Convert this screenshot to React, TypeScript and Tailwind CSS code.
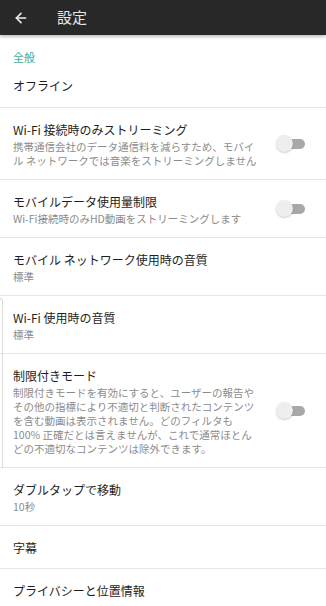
import { ArrowLeft } from 'lucide-react';

type Item = {
  title: string;
  sub?: string[];
  toggle?: boolean;
};

const items: Item[] = [
  {
    title: 'Wi-Fi 接続時のみストリーミング',
    sub: ['携帯通信会社のデータ通信料を減らすため、モバイ', 'ル ネットワークでは音楽をストリーミングしません'],
    toggle: true,
  },
  { title: 'モバイルデータ使用量制限', sub: ['Wi-Fi接続時のみHD動画をストリーミングします'], toggle: true },
  { title: 'モバイル ネットワーク使用時の音質', sub: ['標準'] },
  { title: 'Wi-Fi 使用時の音質', sub: ['標準'] },
  {
    title: '制限付きモード',
    sub: [
      '制限付きモードを有効にすると、ユーザーの報告や',
      'その他の指標により不適切と判断されたコンテンツ',
      'を含む動画は表示されません。どのフィルタも',
      '100% 正確だとは言えませんが、これで通常ほとん',
      'どの不適切なコンテンツは除外できます。',
    ],
    toggle: true,
  },
  { title: 'ダブルタップで移動', sub: ['10秒'] },
  { title: '字幕' },
  { title: 'プライバシーと位置情報' },
];

function Toggle() {
  return (
    <div className="relative w-[29px] h-[17px] shrink-0">
      <div className="absolute right-0 top-[4px] w-[20px] h-[10px] rounded-full bg-[#a8a8a8]" />
      <div className="absolute left-0 top-0 w-[17px] h-[17px] rounded-full bg-[#eeeeee] shadow-[0_1px_2px_rgba(0,0,0,0.2)]" />
    </div>
  );
}

function Row({ item, last }: { item: Item; last?: boolean }) {
  return (
    <div className={`flex items-center pl-[13px] pr-[21px] ${last ? '' : 'border-b border-[#e6e6e6]'}`}>
      <div className={`flex-1 min-w-0 pt-[14px] ${item.sub ? 'pb-[11px]' : 'pb-[12px]'}`}>
        <div className="text-[12px] leading-[16px] text-[#1e1e1e] whitespace-nowrap">{item.title}</div>
        {item.sub && (
          <div className="mt-[2px] text-[10.5px] leading-[14px] text-[#8c8c8c] whitespace-nowrap">
            {item.sub.map((line, i) => (
              <div key={i}>{line}</div>
            ))}
          </div>
        )}
      </div>
      {item.toggle && <Toggle />}
    </div>
  );
}

export default function App() {
  return (
    <div
      className="relative w-[326px] h-[606px] overflow-hidden bg-white"
      style={{ fontFamily: '"Noto Sans CJK JP", "Noto Sans", Roboto, sans-serif' }}
    >
      {/* App bar */}
      <div className="relative z-10 h-[35px] bg-[#282828] flex items-center shadow-[0_2px_3px_rgba(0,0,0,0.25)]">
        <ArrowLeft className="ml-[13px] w-[16px] h-[16px] text-[#eeeeee]" strokeWidth={2.4} />
        <span className="ml-[28px] text-[15px] text-[#e6e6e6]">設定</span>
      </div>

      {/* Section */}
      <div className="pl-[13px] pt-[15px] text-[11px] leading-[14px] text-[#3fae9e]">全般</div>
      <div className="pl-[13px] pt-[14px] pb-[13px] border-b border-[#e6e6e6] text-[12px] leading-[16px] text-[#1e1e1e]">
        オフライン
      </div>

      {items.map((item, i) => (
        <Row key={item.title} item={item} last={i === items.length - 1} />
      ))}

      {/* edge glow */}
      <div className="absolute left-0 top-[298px] w-[3px] h-[170px] border-r border-t border-[#dcdcdc] rounded-tr-[3px]" />
    </div>
  );
}
